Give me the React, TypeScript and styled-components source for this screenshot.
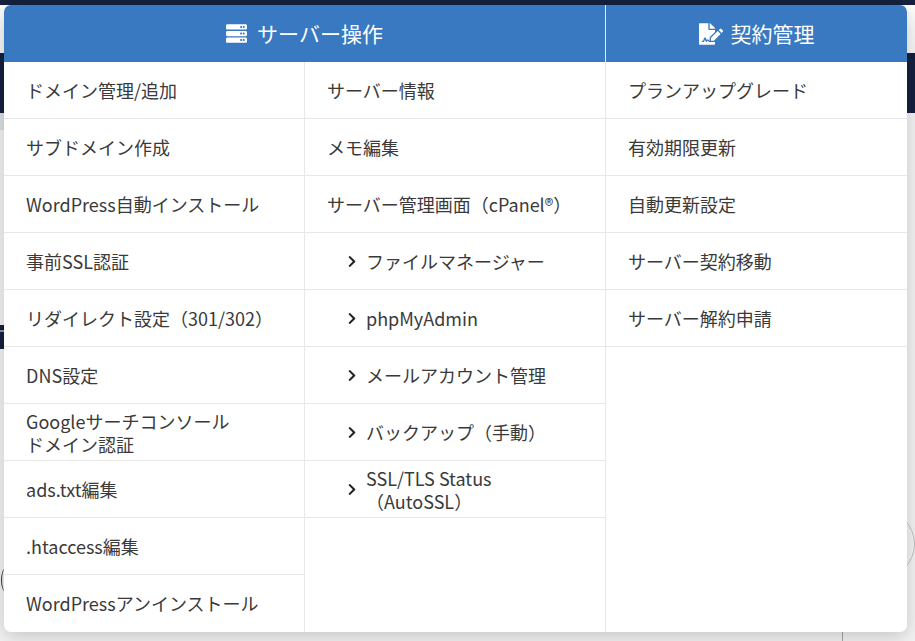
import React from "react";
import styled, { createGlobalStyle } from "styled-components";
import { FaServer, FaFileSignature, FaChevronRight } from "react-icons/fa";

const Global = createGlobalStyle`
  html, body { margin: 0; padding: 0; background: #f4f4f4; }
  body { font-family: "Noto Sans CJK JP", "Noto Sans", sans-serif; overflow: hidden; }
`;

const Page = styled.div`
  position: relative;
  width: 915px;
  height: 641px;
  overflow: hidden;
  background: #f4f4f4;
`;

const Backdrop = styled.div`
  display: flex;
  flex-direction: column;
`;

const TopBar = styled.div`
  height: 5px;
  background: #14213f;
`;

const LightBand = styled.div`
  height: 48px;
  background: linear-gradient(180deg, #ffffff, #f6f6f6);
`;

const NavyBand = styled.div`
  height: 60px;
  background: #14213f;
`;

const PaleBand = styled.div`
  height: 17px;
  background: linear-gradient(90deg, #dce1e4 0 4px, #f4f4f4 4px);
`;

const BackdropSliver = styled.span`
  position: absolute;
  left: 0;
  top: 325px;
  width: 4px;
  height: 24px;
  background: linear-gradient(180deg, #14213f 0 5px, #8d93a3 5px 7px, #14213f 7px);
`;

const BackdropParen = styled.span`
  position: absolute;
  left: 1px;
  top: 568px;
  width: 10px;
  height: 24px;
  border-left: 1.5px solid #333;
  border-radius: 50%;
  box-sizing: border-box;
`;

const BackdropCircle = styled.span`
  position: absolute;
  left: 845px;
  top: 509px;
  width: 70px;
  height: 70px;
  border: 1px solid #c4c4c4;
  border-radius: 50%;
  box-sizing: border-box;
`;

const BackdropTick = styled.span`
  position: absolute;
  left: 842px;
  top: 630px;
  width: 1px;
  height: 11px;
  background: #a8a8a8;
`;

const Panel = styled.div`
  position: absolute;
  left: 4px;
  top: 5px;
  width: 903px;
  height: 627px;
  background: #fff;
  border-radius: 7px;
  overflow: hidden;
  display: flex;
  flex-direction: column;
  box-shadow: 0 5px 20px rgba(0, 0, 0, 0.2);
`;

const HeaderRow = styled.div`
  display: flex;
  height: 57px;
  background: #3879c2;
  color: #fff;
`;

const HeaderCell = styled.div<{ $width: number; $gap: number; $divider?: boolean }>`
  width: ${(p) => p.$width}px;
  box-sizing: border-box;
  display: flex;
  align-items: center;
  justify-content: center;
  gap: ${(p) => p.$gap}px;
  font-size: 21px;
  line-height: 1;
  border-right: ${(p) => (p.$divider ? "1px solid #e8edf4" : "none")};
`;

const Columns = styled.div`
  display: flex;
  flex: 1;
`;

const Column = styled.div<{ $width: number; $divider?: boolean }>`
  width: ${(p) => p.$width}px;
  box-sizing: border-box;
  display: flex;
  flex-direction: column;
  border-right: ${(p) => (p.$divider ? "1px solid #e8e8e8" : "none")};
`;

const Row = styled.div<{ $last?: boolean; $sub?: boolean }>`
  height: 57px;
  box-sizing: border-box;
  flex: none;
  display: flex;
  align-items: center;
  gap: 9px;
  padding-left: ${(p) => (p.$sub ? "42px" : "22px")};
  padding-top: ${(p) => (p.$last ? "0" : "1px")};
  font-size: 18px;
  line-height: 23px;
  color: #3a3a3a;
  border-bottom: ${(p) => (p.$last ? "none" : "1px solid #e8e8e8")};
`;

const Chevron = styled(FaChevronRight)`
  width: 10px;
  height: 13px;
  color: #222;
  flex: none;
`;

type Item = { label: React.ReactNode; sub?: boolean };

const col1: Item[] = [
  { label: "ドメイン管理/追加" },
  { label: "サブドメイン作成" },
  { label: "WordPress自動インストール" },
  { label: "事前SSL認証" },
  { label: "リダイレクト設定（301/302）" },
  { label: "DNS設定" },
  { label: <>Googleサーチコンソール<br />ドメイン認証</> },
  { label: "ads.txt編集" },
  { label: ".htaccess編集" },
  { label: "WordPressアンインストール" },
];

const col2: Item[] = [
  { label: "サーバー情報" },
  { label: "メモ編集" },
  { label: "サーバー管理画面（cPanel®）" },
  { label: "ファイルマネージャー", sub: true },
  { label: "phpMyAdmin", sub: true },
  { label: "メールアカウント管理", sub: true },
  { label: "バックアップ（手動）", sub: true },
  { label: <>SSL/TLS Status<br />（AutoSSL）</>, sub: true },
];

const col3: Item[] = [
  { label: "プランアップグレード" },
  { label: "有効期限更新" },
  { label: "自動更新設定" },
  { label: "サーバー契約移動" },
  { label: "サーバー解約申請" },
];

const renderRows = (items: Item[], lastOpen = false) =>
  items.map((item, i) => (
    <Row key={i} $sub={item.sub} $last={lastOpen && i === items.length - 1}>
      {item.sub && <Chevron />}
      <span>{item.label}</span>
    </Row>
  ));

export default function App() {
  return (
    <Page>
      <Global />
      <Backdrop>
        <TopBar />
        <LightBand />
        <NavyBand />
        <PaleBand />
      </Backdrop>
      <BackdropSliver />
      <BackdropParen />
      <BackdropCircle />
      <BackdropTick />
      <Panel>
        <HeaderRow>
          <HeaderCell $width={602} $gap={10} $divider>
            <FaServer size={21} />
            サーバー操作
          </HeaderCell>
          <HeaderCell $width={301} $gap={8}>
            <FaFileSignature size={24} />
            契約管理
          </HeaderCell>
        </HeaderRow>
        <Columns>
          <Column $width={301} $divider>{renderRows(col1, true)}</Column>
          <Column $width={301} $divider>{renderRows(col2)}</Column>
          <Column $width={301}>{renderRows(col3)}</Column>
        </Columns>
      </Panel>
    </Page>
  );
}
